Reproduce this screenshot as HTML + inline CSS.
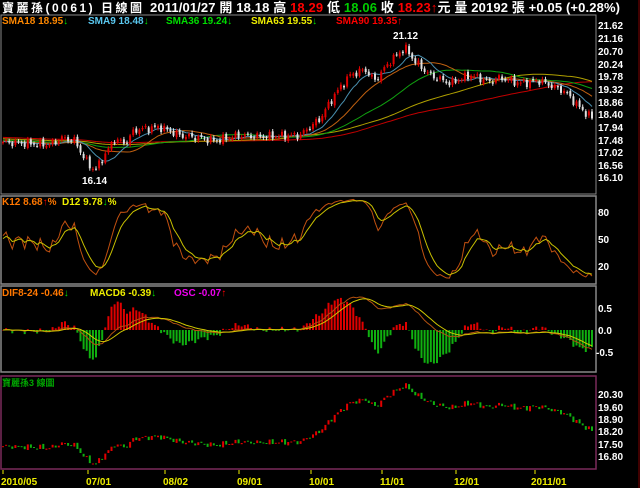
<!DOCTYPE html>
<html><head><meta charset="utf-8"><style>
html,body{margin:0;padding:0;background:#000;width:640px;height:488px;overflow:hidden}
svg{display:block}
text{font-family:"Liberation Sans","Noto Sans CJK TC",sans-serif;font-weight:bold}
</style></head><body>
<svg id="s" width="640" height="488" xmlns="http://www.w3.org/2000/svg">
<rect width="640" height="488" fill="#000"/>
<line x1="639" y1="0" x2="639" y2="488" stroke="#800000" stroke-width="1"/>
<text x="2" y="12" font-size="12" fill="#fff" font-weight="normal" textLength="140" lengthAdjust="spacing">寶麗孫(0061) 日線圖</text>
<text x="150" y="12" font-size="13" fill="#fff" textLength="470" lengthAdjust="spacing">2011/01/27  開 18.18  高 <tspan fill="#f00">18.29</tspan> 低 <tspan fill="#0c0">18.06</tspan> 收 <tspan fill="#f00">18.23</tspan><tspan fill="#f00">↑</tspan>元  量 20192 張  +0.05 (+0.28%)</text>
<rect x="1" y="15" width="595" height="179" fill="none" stroke="#888" stroke-width="1"/>
<text x="2" y="24" font-size="10" fill="#f80">SMA18 18.95<tspan fill="#0d0">↓</tspan></text>
<text x="88" y="24" font-size="10" fill="#5ac8f0">SMA9 18.48<tspan fill="#0d0">↓</tspan></text>
<text x="166" y="24" font-size="10" fill="#0d0">SMA36 19.24<tspan fill="#0d0">↓</tspan></text>
<text x="251" y="24" font-size="10" fill="#ee0">SMA63 19.55<tspan fill="#0d0">↓</tspan></text>
<text x="336" y="24" font-size="10" fill="#f00">SMA90 19.35<tspan fill="#f00">↑</tspan></text>
<g font-size="10" fill="#fff">
<text x="598" y="29">21.62</text><text x="598" y="55">20.70</text><text x="598" y="42">21.16</text><text x="598" y="68">20.24</text><text x="598" y="80">19.78</text><text x="598" y="93">19.32</text><text x="598" y="106">18.86</text><text x="598" y="118">18.40</text><text x="598" y="131">17.94</text><text x="598" y="144">17.48</text><text x="598" y="156">17.02</text><text x="598" y="169">16.56</text><text x="598" y="181">16.10</text>
<text x="393" y="39" font-size="10">21.12</text><text x="82" y="184" font-size="10">16.14</text>
</g>
<rect x="1" y="196" width="595" height="88" fill="none" stroke="#888" stroke-width="1.5"/>
<text x="2" y="205" font-size="10" fill="#f70">K12 8.68<tspan fill="#f00">↑</tspan>%</text>
<text x="62" y="205" font-size="10" fill="#ee0">D12 9.78<tspan fill="#0d0">↓</tspan>%</text>
<g font-size="10" fill="#fff"><text x="598" y="216">80</text><text x="598" y="243">50</text><text x="598" y="270">20</text></g>
<rect x="1" y="286" width="595" height="86" fill="none" stroke="#888" stroke-width="1.5"/>
<text x="2" y="296" font-size="10" fill="#f70">DIF8-24 -0.46<tspan fill="#0d0">↓</tspan></text>
<text x="90" y="296" font-size="10" fill="#ee0">MACD6 -0.39<tspan fill="#0d0">↓</tspan></text>
<text x="174" y="296" font-size="10" fill="#e0e">OSC -0.07<tspan fill="#f00">↑</tspan></text>
<g font-size="10" fill="#fff"><text x="598" y="312">0.5</text><text x="598" y="334">0.0</text><text x="596" y="356">-0.5</text></g>
<rect x="1" y="376" width="595" height="93" fill="none" stroke="#7a2a5a" stroke-width="1.5"/>
<text x="2" y="386" font-size="9" fill="#0a0" font-weight="normal">寶麗孫3 線圖</text>
<g font-size="10" fill="#fff"><text x="598" y="398">20.30</text><text x="598" y="411">19.60</text><text x="598" y="423">18.90</text><text x="598" y="435">18.20</text><text x="598" y="448">17.50</text><text x="598" y="460">16.80</text></g>
<g font-size="10" fill="#ee0">
<text x="1" y="485">2010/05</text><text x="86" y="485">07/01</text><text x="163" y="485">08/02</text><text x="237" y="485">09/01</text><text x="309" y="485">10/01</text><text x="380" y="485">11/01</text><text x="454" y="485">12/01</text><text x="531" y="485">2011/01</text>
</g>
<g id="g"></g>
</svg>
<script>
var kp=[[3,17.35],[50,17.25],[62,17.5],[75,17.4],[85,16.7],[95,16.3],[105,16.9],[115,17.45],[125,17.3],[135,17.8],[160,17.9],[180,17.6],[200,17.5],[215,17.4],[240,17.6],[260,17.55],[300,17.6],[320,18.2],[335,19.1],[350,19.8],[365,20.0],[375,19.6],[390,20.3],[405,20.8],[415,20.3],[430,19.8],[450,19.5],[470,19.8],[490,19.55],[500,19.7],[520,19.5],[540,19.6],[555,19.35],[565,19.2],[580,18.6],[593,18.2]];
function ip(x){for(var j=1;j<kp.length;j++){if(x<=kp[j][0]){var a=kp[j-1],b=kp[j];return a[1]+(b[1]-a[1])*(x-a[0])/(b[0]-a[0]);}}return kp[kp.length-1][1];}
var N=191,X=[],C=[],O=[],H=[],L=[];
for(var i=0;i<N;i++){var x=3+i*3.1;X.push(x);C.push(ip(x)+0.1*Math.sin(i*1.7)+0.07*Math.sin(i*3.3));}
for(i=0;i<N;i++){O.push(i?C[i-1]+0.05*Math.sin(i*2.1):C[0]);H.push(Math.max(O[i],C[i])+0.05+0.04*Math.abs(Math.sin(i)));L.push(Math.min(O[i],C[i])-0.05-0.04*Math.abs(Math.cos(i)));}
function ym(p){return 25.3+(21.62-p)*27.36;}
function yb(p){return 394+(20.3-p)*17.7;}
function yk(v){return 213+(80-v)*0.9;}
function yd(v){return 330-v*44;}
var o='';
function sma(n){var r=[];for(var i=0;i<N;i++){var s=0;for(var j=i-n+1;j<=i;j++)s+=C[Math.max(0,j)]-(j<0?(0.35*(n/90)*(j/n)):0);r.push(s/n);}return r;}
function pl(a,f,c){var d='';for(var i=0;i<N;i++)d+=(i?'L':'M')+X[i].toFixed(1)+' '+f(a[i]).toFixed(1);o+='<path d="'+d+'" fill="none" stroke="'+c+'" stroke-width="1"/>';}
[[90,'#c00000'],[63,'#b0a000'],[36,'#10a010'],[18,'#c06010'],[9,'#4a90b0']].forEach(function(m){pl(sma(m[0]),ym,m[1]);});
for(i=0;i<N;i++){var up=C[i]>=O[i];var col=up?'#e00000':'#e0e0e0';o+='<line x1="'+X[i]+'" x2="'+X[i]+'" y1="'+ym(H[i]).toFixed(1)+'" y2="'+ym(L[i]).toFixed(1)+'" stroke="'+col+'"/>';var t=ym(Math.max(O[i],C[i])),b=ym(Math.min(O[i],C[i]));o+='<rect x="'+(X[i]-1)+'" y="'+t.toFixed(1)+'" width="2" height="'+Math.max(1,b-t).toFixed(1)+'" fill="'+col+'"/>';
var c2=up?'#e00000':'#10b010';t=yb(Math.max(O[i],C[i]));b=yb(Math.min(O[i],C[i]));o+='<rect x="'+(X[i]-1)+'" y="'+t.toFixed(1)+'" width="2" height="'+Math.max(1,b-t).toFixed(1)+'" fill="'+c2+'"/>';}
var K=[],D=[],k=50,d=50;
for(i=0;i<N;i++){var hh=-1e9,ll=1e9;for(var j=Math.max(0,i-11);j<=i;j++){hh=Math.max(hh,H[j]);ll=Math.min(ll,L[j]);}var r=(C[i]-ll)/(hh-ll)*100;k=k*2/3+r/3;d=d*2/3+k/3;K.push(k);D.push(d);}
pl(K,yk,'#c05010');pl(D,yk,'#c8c000');
var e8=C[0],e24=C[0],m=0,DIF=[],MAC=[];
for(i=0;i<N;i++){e8+=(C[i]-e8)*2/9;e24+=(C[i]-e24)*2/25;var df=e8-e24;m+=(df-m)*2/7;DIF.push(df);MAC.push(m);var os=(df-m)*5;var y0=330,y1=yd(os);o+='<rect x="'+(X[i]-1)+'" y="'+Math.min(y0,y1).toFixed(1)+'" width="2" height="'+Math.max(0.5,Math.abs(y1-y0)).toFixed(1)+'" fill="'+(os>=0?'#e00000':'#10b010')+'"/>';}
pl(DIF,yd,'#b05010');pl(MAC,yd,'#d0c800');
[3,88,165,239,311,382,456,535].forEach(function(x){o+='<line x1="'+x+'" x2="'+x+'" y1="470" y2="474" stroke="#ee0"/>';});
document.getElementById('g').innerHTML=o;
</script>
</body></html>
